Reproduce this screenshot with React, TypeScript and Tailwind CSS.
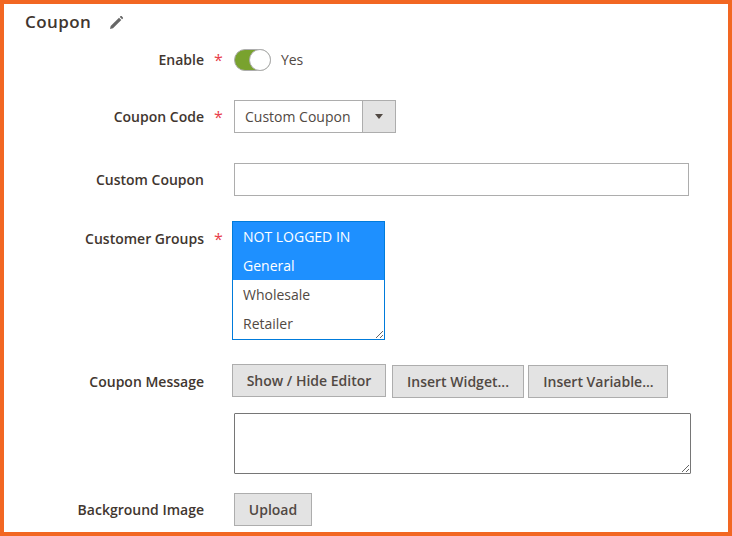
import React from 'react'

const font = { fontFamily: '"Open Sans", sans-serif' }

function Label({ text, required }: { text: string; required?: boolean }) {
  return (
    <div className="flex w-[230px] shrink-0 items-center">
      <span className="w-[200px] text-right text-[14px] font-semibold leading-[20px] text-[#41362f]">{text}</span>
      {required && <span className="ml-[10px] text-[16px] font-normal leading-[20px] text-[#e8404a]">*</span>}
    </div>
  )
}

function Btn({ children, className }: { children: React.ReactNode; className?: string }) {
  return (
    <button className={`h-[33px] border border-[#adadad] bg-[#e3e3e3] text-[14px] font-semibold leading-[20px] text-[#514943] ${className ?? ''}`}>
      {children}
    </button>
  )
}

export default function App() {
  return (
    <div style={font} className="h-[536px] w-[732px] overflow-hidden border-4 border-[#f26722] bg-white">
      <div className="flex h-[36px] items-center pl-[21px]">
        <h2 className="text-[17px] font-semibold tracking-[0.4px] text-[#41362f]">Coupon</h2>
        <svg className="ml-[18px]" width="15" height="15" viewBox="0 0 15 15" fill="#666">
          <path d="M1 14l.7-3 8.3-8.3 2.3 2.3-8.3 8.3z" />
          <path d="M10.8 1.9l.8-.8c.3-.3.7-.3 1 0l1.3 1.3c.3.3.3.7 0 1l-.8.8z" />
        </svg>
      </div>

      <div className="mt-[9px] flex h-[22px] items-center">
        <Label text="Enable" required />
        <div className="flex h-[22px] w-[37px] items-center justify-end rounded-full border border-[#adadad] bg-[#79a22e]">
          <div className="-mr-[1px] h-[22px] w-[22px] rounded-full border border-[#adadad] bg-white" />
        </div>
        <span className="ml-[10px] -mt-[1px] text-[14px] tracking-[-0.1px] text-[#514943]">Yes</span>
      </div>

      <div className="mt-[29px] flex h-[33px] items-center">
        <Label text="Coupon Code" required />
        <div className="flex h-[33px] w-[162px] border border-[#adadad]">
          <span className="flex flex-1 items-center pl-[10px] text-[14px] text-[#514943]">Custom Coupon</span>
          <span className="flex w-[33px] items-center justify-center border-l border-[#adadad] bg-[#e3e3e3]">
            <span className="h-0 w-0 border-x-[4.5px] border-t-[5px] border-x-transparent border-t-[#514943]" />
          </span>
        </div>
      </div>

      <div className="mt-[30px] flex h-[33px] items-center">
        <Label text="Custom Coupon" />
        <input className="h-[33px] w-[455px] border border-[#adadad] bg-white outline-none" />
      </div>

      <div className="mt-[25px] flex">
        <div className="flex h-[36px] items-center">
          <Label text="Customer Groups" required />
        </div>
        <div className="-ml-[2px] h-[119px] w-[153px] resize overflow-hidden border border-[#007bdb] text-[14px] leading-[29px] text-[#514943]">
          <div className="h-[29px] bg-[#1e90ff] pl-[10px] text-white">NOT LOGGED IN</div>
          <div className="h-[29px] bg-[#1e90ff] pl-[10px] text-white">General</div>
          <div className="h-[29px] pl-[10px]">Wholesale</div>
          <div className="h-[29px] pl-[10px]">Retailer</div>
        </div>
      </div>

      <div className="mt-[24px] flex items-start">
        <div className="flex h-[36px] items-center">
          <Label text="Coupon Message" />
        </div>
        <div className="-ml-[2px] flex gap-[6px]">
          <Btn className="w-[154px]">Show / Hide Editor</Btn>
          <Btn className="mt-[1px] w-[132px]">Insert Widget...</Btn>
          <Btn className="-ml-[2px] mt-[1px] w-[140px] pl-[1px]">Insert Variable...</Btn>
        </div>
      </div>

      <div className="mt-[13px] flex">
        <div className="w-[230px] shrink-0" />
        <textarea className="block h-[61px] w-[457px] rounded-[1px] border border-[#767676] bg-white outline-none" />
      </div>

      <div className="mt-[19px] flex h-[33px] items-center">
        <Label text="Background Image" />
        <Btn className="w-[78px]">Upload</Btn>
      </div>
    </div>
  )
}
